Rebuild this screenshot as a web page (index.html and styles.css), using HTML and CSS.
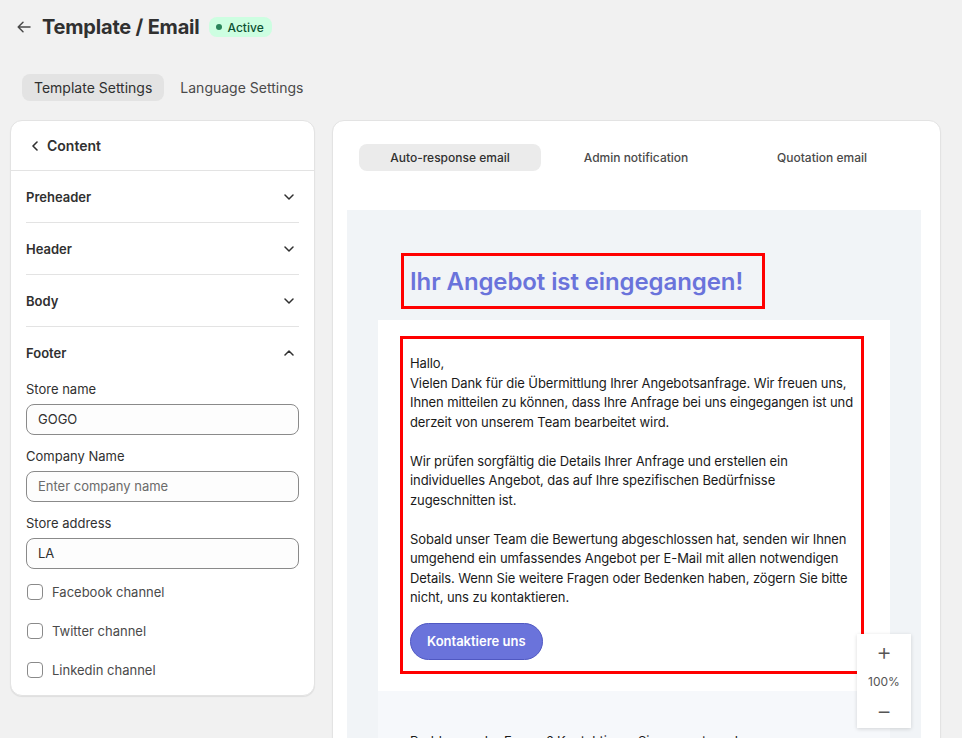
FILE: index.html
```html
<!DOCTYPE html>
<html lang="de">
<head>
  <meta charset="UTF-8">
  <title>Template / Email</title>
  <link rel="stylesheet" href="styles.css">
</head>
<body>
  <div class="page">
    <div class="topbar">
      <svg class="back" width="14" height="12" viewBox="0 0 14 12"><path d="M13 6H1.5M6 1.2L1.2 6L6 10.8" fill="none" stroke="#4a4a4a" stroke-width="1.5" stroke-linecap="round" stroke-linejoin="round"/></svg>
      <h1>Template / Email</h1>
      <span class="badge"><i></i>Active</span>
    </div>

    <div class="tabs">
      <span class="tab on">Template Settings</span>
      <span class="tab">Language Settings</span>
    </div>

    <div class="main">
      <div class="card side">
        <div class="side-head">
          <svg width="8" height="10" viewBox="0 0 8 10"><path d="M6 1L2 5L6 9" fill="none" stroke="#303030" stroke-width="1.6" stroke-linecap="round" stroke-linejoin="round"/></svg>
          Content
        </div>
        <div class="sections">
          <div class="section">Preheader <svg width="10" height="6" viewBox="0 0 10 6"><path d="M1 1L5 5L9 1" fill="none" stroke="#303030" stroke-width="1.5" stroke-linecap="round" stroke-linejoin="round"/></svg></div>
          <div class="section">Header <svg width="10" height="6" viewBox="0 0 10 6"><path d="M1 1L5 5L9 1" fill="none" stroke="#303030" stroke-width="1.5" stroke-linecap="round" stroke-linejoin="round"/></svg></div>
          <div class="section">Body <svg width="10" height="6" viewBox="0 0 10 6"><path d="M1 1L5 5L9 1" fill="none" stroke="#303030" stroke-width="1.5" stroke-linecap="round" stroke-linejoin="round"/></svg></div>
          <div class="section last">Footer <svg width="10" height="6" viewBox="0 0 10 6"><path d="M1 5L5 1L9 5" fill="none" stroke="#303030" stroke-width="1.5" stroke-linecap="round" stroke-linejoin="round"/></svg></div>

          <div class="field">
            <label>Store name</label>
            <div class="input">GOGO</div>
          </div>
          <div class="field">
            <label>Company Name</label>
            <div class="input empty">Enter company name</div>
          </div>
          <div class="field">
            <label>Store address</label>
            <div class="input">LA</div>
          </div>

          <div class="check"><span class="box"></span>Facebook channel</div>
          <div class="check"><span class="box"></span>Twitter channel</div>
          <div class="check"><span class="box"></span>Linkedin channel</div>
        </div>
      </div>

      <div class="card preview-card">
        <div class="mail-tabs">
          <span class="mail-tab on">Auto-response email</span>
          <span class="mail-tab">Admin notification</span>
          <span class="mail-tab">Quotation email</span>
        </div>

        <div class="preview">
          <div class="mail-title">Ihr Angebot ist eingegangen!</div>
          <div class="mail-card">
            <div class="mail-body">
              <p>Hallo,<br>Vielen Dank für die Übermittlung Ihrer Angebotsanfrage. Wir freuen uns, Ihnen mitteilen zu können, dass Ihre Anfrage bei uns eingegangen ist und derzeit von unserem Team bearbeitet wird.<br><br>Wir prüfen sorgfältig die Details Ihrer Anfrage und erstellen ein individuelles Angebot, das auf Ihre spezifischen Bedürfnisse zugeschnitten ist.<br><br>Sobald unser Team die Bewertung abgeschlossen hat, senden wir Ihnen umgehend ein umfassendes Angebot per E-Mail mit allen notwendigen Details. Wenn Sie weitere Fragen oder Bedenken haben, zögern Sie bitte nicht, uns zu kontaktieren.</p>
              <span class="mail-btn">Kontaktiere uns</span>
            </div>
          </div>
          <div class="mail-foot">Probleme oder Fragen? Kontaktieren Sie uns unter oder</div>
        </div>

        <div class="zoom">
          <span class="zoom-btn">+</span>
          <span class="zoom-val">100%</span>
          <span class="zoom-btn minus">&minus;</span>
        </div>
      </div>
    </div>
  </div>
</body>
</html>
```

FILE: styles.css
```css
* {
  box-sizing: border-box;
}

body {
  margin: 0;
  background: #f1f1f1;
  font-family: Inter, "Noto Sans", sans-serif;
  color: #303030;
  overflow: hidden;
}

.page {
  padding: 12px 21px 0 10px;
}

.topbar {
  display: flex;
  align-items: center;
  height: 30px;
  padding-left: 7px;
}

.back {
  margin-right: 11px;
}

h1 {
  margin: 0 9px 0 0;
  font-size: 20px;
  font-weight: 700;
  color: #303030;
  letter-spacing: -0.2px;
}

.badge {
  display: inline-flex;
  align-items: center;
  height: 20px;
  padding: 0 8px 0 7px;
  border-radius: 8px;
  background: #cdfee1;
  color: #0c5132;
  font-size: 12px;
  font-weight: 500;
}

.badge i {
  width: 6px;
  height: 6px;
  border-radius: 50%;
  background: #29845a;
  margin-right: 6px;
}

.tabs {
  display: flex;
  gap: 4px;
  margin-top: 32px;
  padding-left: 12px;
}

.tab {
  height: 27px;
  line-height: 27px;
  padding: 0 12px;
  border-radius: 8px;
  font-size: 14px;
  color: #4a4a4a;
}

.tab.on {
  background: #e3e3e3;
  color: #303030;
}

.main {
  display: flex;
  align-items: flex-start;
  gap: 17px;
  margin-top: 19px;
}

.card {
  background: #fff;
  border: 1px solid #e3e3e3;
  border-radius: 12px;
  box-shadow: 0 1px 1px rgba(0, 0, 0, 0.08);
}

.side {
  width: 305px;
  padding-bottom: 10px;
}

.side-head {
  display: flex;
  align-items: center;
  gap: 8px;
  height: 50px;
  padding-left: 20px;
  border-bottom: 1px solid #e3e3e3;
  font-size: 14px;
  font-weight: 600;
}

.sections {
  padding: 0 15px;
}

.section {
  display: flex;
  align-items: center;
  justify-content: space-between;
  height: 52px;
  padding-right: 5px;
  border-bottom: 1px solid #e3e3e3;
  font-size: 13px;
  font-weight: 600;
}

.section.last {
  border-bottom: none;
  height: 52px;
}

.field {
  margin-bottom: 11px;
}

.field label {
  display: block;
  font-size: 13px;
  line-height: 20px;
  margin-bottom: 5px;
}

.input {
  height: 31px;
  line-height: 29px;
  padding: 0 11px;
  border: 1px solid #8a8a8a;
  border-radius: 8px;
  background: #fdfdfd;
  font-size: 13px;
  color: #303030;
}

.input.empty {
  color: #6b6b6b;
}

.check {
  display: flex;
  align-items: center;
  height: 20px;
  margin-top: 13px;
  margin-bottom: 5px;
  font-size: 13px;
  color: #4a4a4a;
}

.check + .check {
  margin-top: 19px;
}

.check .box {
  width: 16px;
  height: 16px;
  margin: 0 9px 0 1px;
  border: 1px solid #8a8a8a;
  border-radius: 4px;
  background: #fff;
}

.preview-card {
  flex: 1;
  height: 700px;
  position: relative;
  overflow: hidden;
}

.mail-tabs {
  display: grid;
  grid-template-columns: repeat(3, 1fr);
  gap: 4px;
  padding: 23px 27px 0 26px;
}

.mail-tab {
  height: 27px;
  line-height: 27px;
  text-align: center;
  border-radius: 8px;
  font-size: 12px;
  font-weight: 500;
  color: #4a4a4a;
}

.mail-tab.on {
  background: #ebebeb;
  color: #303030;
}

.preview {
  margin: 39px 19px 0 14px;
  padding: 43px 31px 0;
  background: #f1f4f7;
  min-height: 600px;
}

.mail-title {
  width: 364px;
  height: 56px;
  margin-left: 23px;
  padding: 2px 0 0 6px;
  border: 3px solid #f00;
  font-size: 24px;
  font-weight: 600;
  line-height: 48px;
  color: #6a73db;
  letter-spacing: -0.1px;
}

.mail-card {
  margin-top: 11px;
  padding: 16px 26px 17px 22px;
  background: #fff;
}

.mail-body {
  border: 3px solid #f00;
  padding: 15px 3px 11px 7px;
}

.mail-body p {
  margin: 0 0 15px;
  font-size: 13px;
  line-height: 19.5px;
  letter-spacing: -0.1px;
  color: #1a1a1a;
}

.mail-btn {
  display: inline-block;
  height: 37px;
  line-height: 35px;
  padding: 0 16px;
  border: 1px solid #5058c2;
  border-radius: 19px;
  background: #6a73db;
  color: #fff;
  font-size: 13px;
  font-weight: 600;
}

.mail-foot {
  background: #f6f8fb;
  padding: 42px 32px 40px;
  font-size: 13px;
  color: #1a1a1a;
}

.zoom {
  position: absolute;
  top: 513px;
  right: 29px;
  width: 54px;
  height: 94px;
  display: flex;
  flex-direction: column;
  align-items: center;
  background: #fff;
  box-shadow: 0 1px 4px rgba(0, 0, 0, 0.15);
}

.zoom-btn {
  height: 36px;
  font-size: 24px;
  font-weight: 300;
  line-height: 36px;
  color: #555;
}

.zoom-btn.minus {
  height: 30px;
  line-height: 30px;
  margin-top: 4px;
}

.zoom-val {
  height: 20px;
  margin-top: 2px;
  font-size: 12px;
  line-height: 20px;
  color: #555;
}
```
